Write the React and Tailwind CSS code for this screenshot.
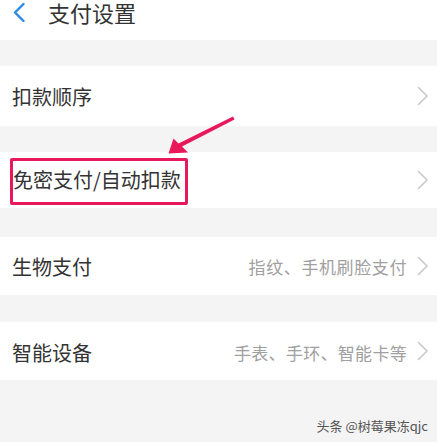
export default function App() {
  const font = { fontFamily: '"Noto Sans CJK SC", "Noto Sans", sans-serif' };
  const Chevron = () => (
    <svg width="12" height="20" viewBox="0 0 12 20" className="shrink-0">
      <path d="M1.5 1.5 L10 10 L1.5 18.5" fill="none" stroke="#c8c8c8" strokeWidth="1.6" strokeLinecap="round" strokeLinejoin="round" />
    </svg>
  );
  return (
    <div className="relative w-[437px] h-[442px] bg-[#f4f4f4] overflow-hidden text-[#333333]" style={font}>
      <div className="h-[40px] bg-white flex items-start">
        <div className="flex items-center h-[24px]">
          <svg width="14" height="20" viewBox="0 0 14 20" className="ml-[12px]">
            <path d="M11.5 2 L3 10.5 L11.5 19" fill="none" stroke="#2a8be8" strokeWidth="2.4" strokeLinecap="round" strokeLinejoin="round" />
          </svg>
          <span className="ml-[22px] text-[22px] leading-[24px] text-[#333333]">支付设置</span>
        </div>
      </div>
      <div className="h-[26px]" />
      <div className="h-[60px] bg-white flex items-center pl-[12px] pr-[8px]">
        <span className="text-[20px] flex-1 pt-[2px]">扣款顺序</span>
        <Chevron />
      </div>
      <div className="h-[26px]" />
      <div className="relative h-[56px] bg-white flex items-center pl-[13px] pr-[8px]">
        <span className="text-[20px] flex-1">免密支付/自动扣款</span>
        <Chevron />
        <div className="absolute left-[10px] top-[6px] w-[178px] h-[47px] border-[3px] border-[#e8195a] rounded-[2px]" />
      </div>
      <div className="h-[29px]" />
      <div className="h-[58px] bg-white flex items-center pl-[12px] pr-[8px]">
        <span className="text-[20px] flex-1 pt-[2px]">生物支付</span>
        <span className="text-[17px] tracking-[0.6px] text-[#a0a0a0] mr-[10px] pt-[2px]">指纹、手机刷脸支付</span>
        <Chevron />
      </div>
      <div className="h-[27px]" />
      <div className="h-[58px] bg-white flex items-center pl-[12px] pr-[8px]">
        <span className="text-[20px] flex-1 pt-[4px]">智能设备</span>
        <span className="text-[17px] tracking-[0.3px] text-[#a0a0a0] mr-[10px] pt-[4px]">手表、手环、智能卡等</span>
        <Chevron />
      </div>
      <div className="absolute right-[9px] bottom-[9px] text-[13px] leading-[15px] text-[#555555]">头条 @树莓果冻qjc</div>
      <svg className="absolute left-0 top-0" width="437" height="442" viewBox="0 0 437 442">
        <path d="M233 116.5 L234.5 119.5 L182 146.5 L188 152.5 L168.5 153.5 L173.5 138.5 L178.5 143.5 Z" fill="#e8195a" />
      </svg>
    </div>
  );
}
